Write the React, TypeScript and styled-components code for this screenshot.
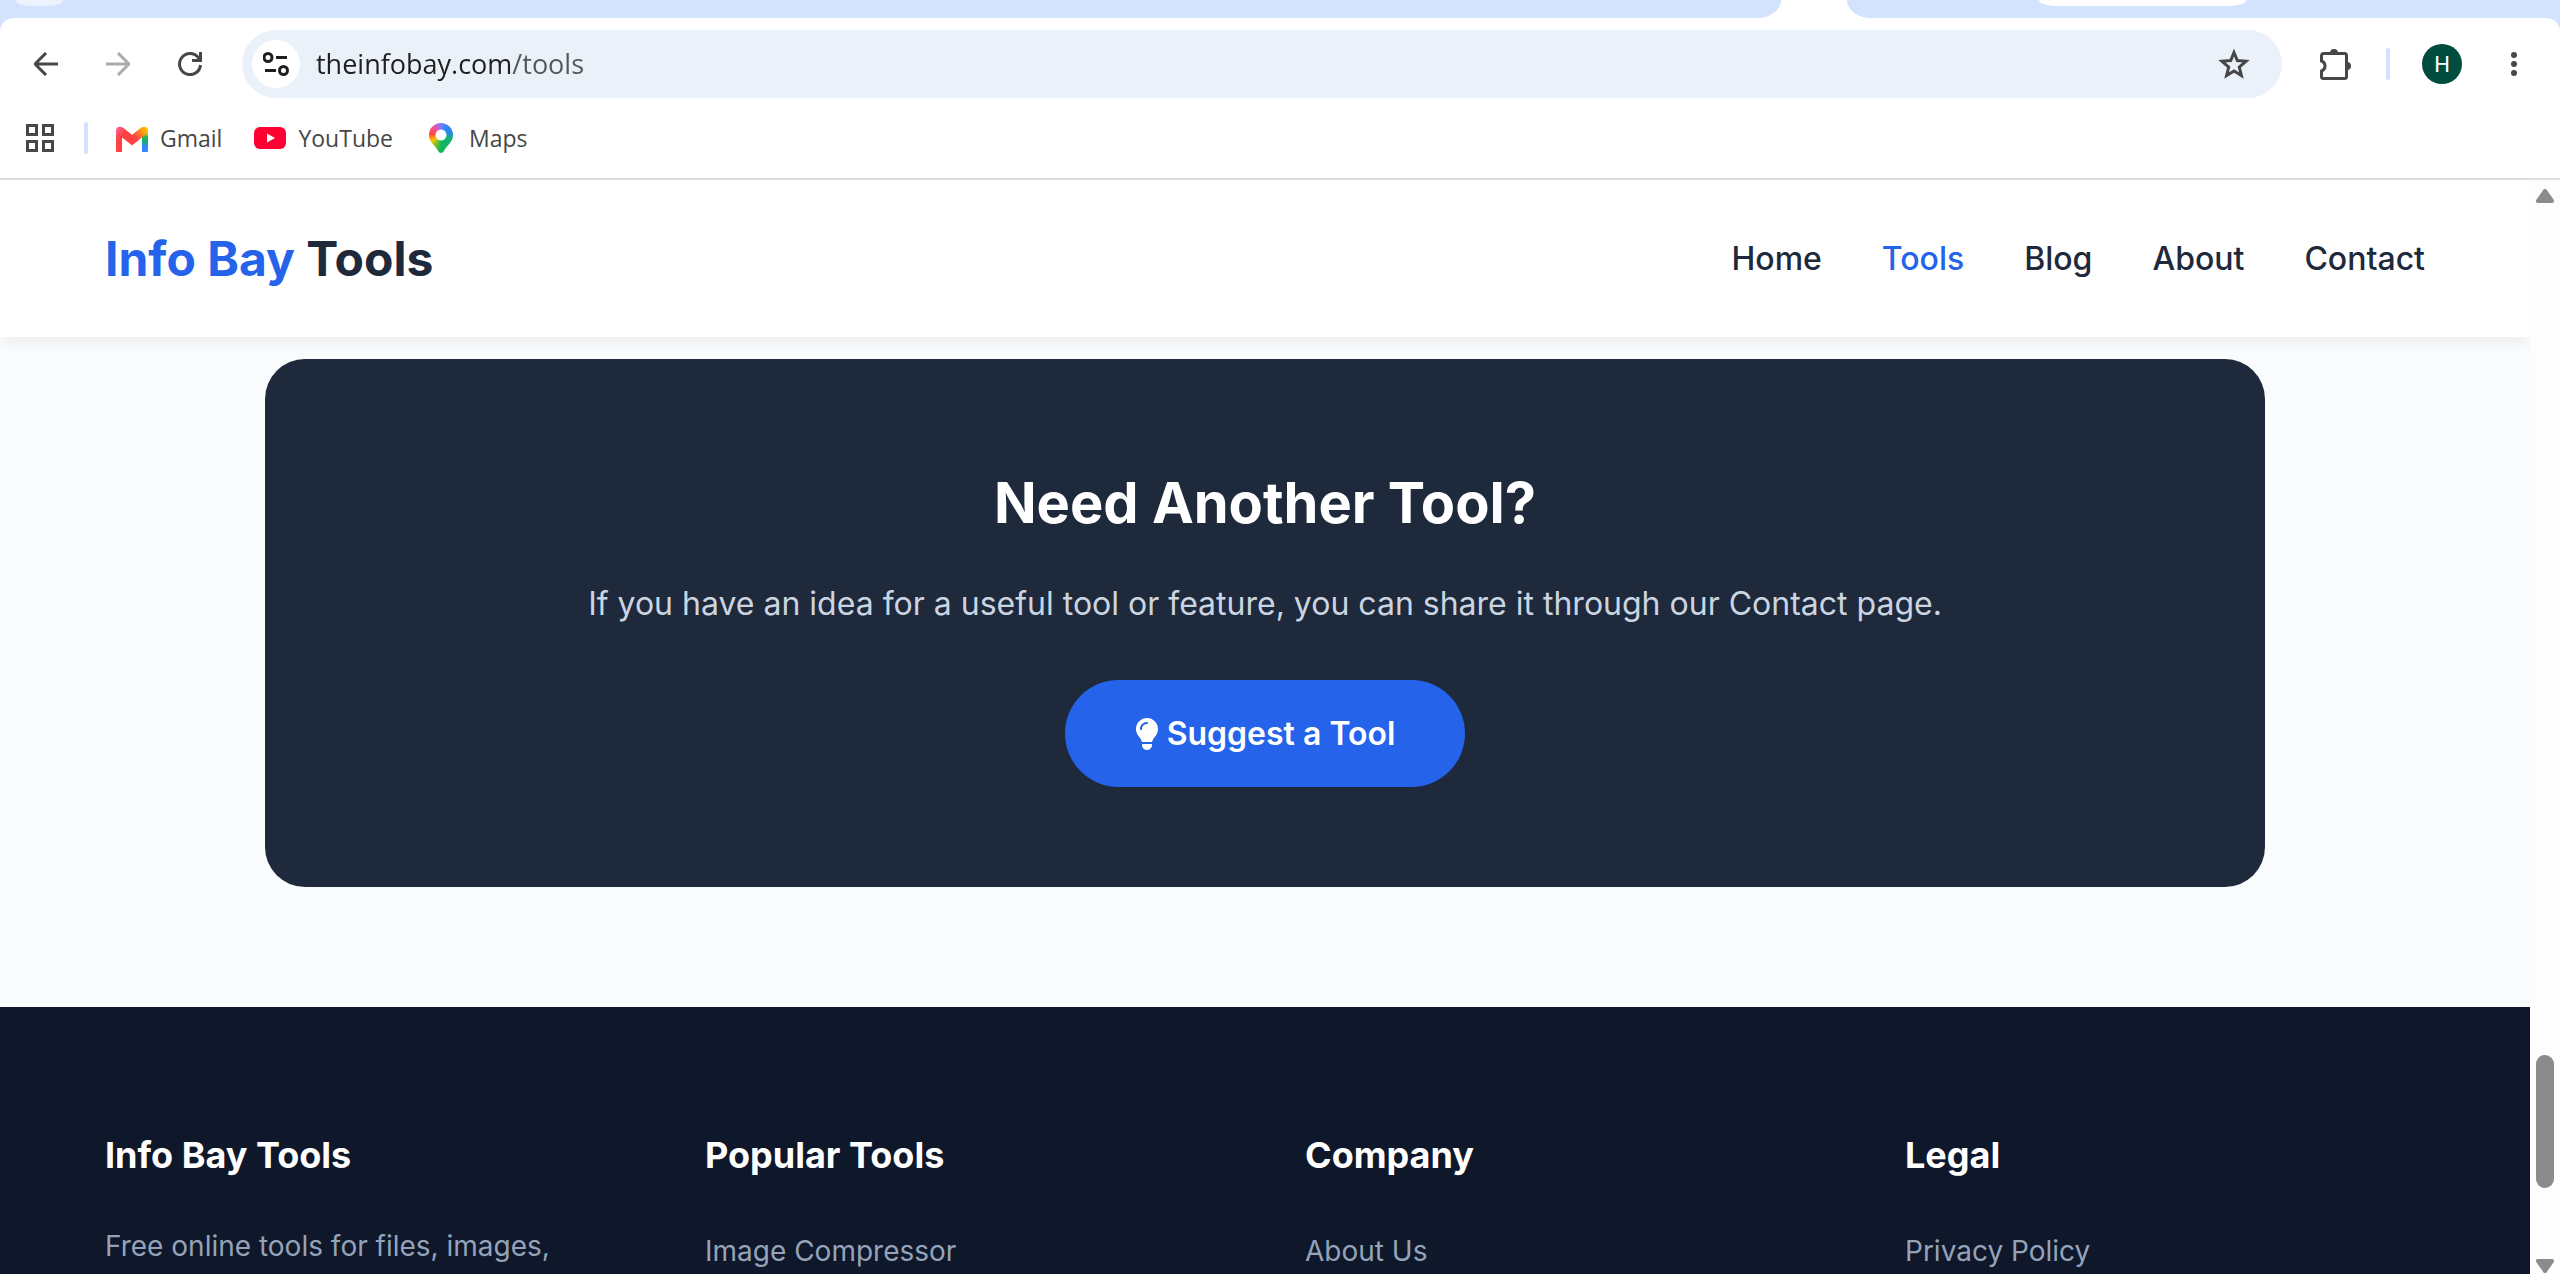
import React from 'react';
import styled, { createGlobalStyle } from 'styled-components';
import { FaLightbulb } from 'react-icons/fa6';

const GlobalStyle = createGlobalStyle`
  *, *::before, *::after { box-sizing: border-box; }
  body { margin: 0; background: #fff; font-family: Inter, sans-serif; overflow: hidden; }
  h2, h3, p, ul { margin: 0; padding: 0; }
  button, input { font: inherit; border: 0; margin: 0; }
  button { cursor: pointer; }
  a { color: inherit; text-decoration: none; }
`;

const Window = styled.div`
  height: 100vh;
  display: flex;
  flex-direction: column;
  overflow: hidden;
`;

/* Browser frame */
const TabStrip = styled.div`
  flex: none;
  height: 18px;
  display: flex;
  background: #fff;
`;
const TabsBefore = styled.div`
  flex: 1;
  padding-left: 16px;
  background: #d3e3fd;
  border-bottom-right-radius: 24px 18px;
`;
const ActiveTab = styled.div`
  flex: 0 0 66px;
`;
const TabsAfter = styled.div`
  flex: 0 0 713px;
  padding-left: 192px;
  background: #d3e3fd;
  border-bottom-left-radius: 24px 18px;
`;
const Chip = styled.div<{ $width: number; $color: string }>`
  width: ${(p) => p.$width}px;
  height: 6px;
  background: ${(p) => p.$color};
  border-radius: 0 0 16px 16px / 0 0 6px 6px;
`;
const Chrome = styled.div`
  flex: none;
  background: #d3e3fd;
`;
const ChromeSheet = styled.div`
  background: #fff;
  border-radius: 14px 14px 0 0;
  border-bottom: 2px solid #dedede;
`;
const Toolbar = styled.div`
  height: 92px;
  padding: 0 26px;
  display: flex;
  align-items: center;
  gap: 32px;
`;
const IconButton = styled.button<{ $color?: string }>`
  flex: none;
  display: flex;
  align-items: center;
  justify-content: center;
  width: 40px;
  height: 40px;
  padding: 0;
  background: transparent;
  color: ${(p) => p.$color ?? '#474747'};
`;
const AddressBar = styled.div`
  flex: 1;
  height: 68px;
  padding: 0 28px 0 10px;
  display: flex;
  align-items: center;
  background: #ebf1f9;
  border-radius: 34px;
`;
const SiteInfo = styled.button`
  flex: none;
  width: 48px;
  height: 48px;
  margin-right: 16px;
  padding: 0;
  display: flex;
  align-items: center;
  justify-content: center;
  background: #fff;
  border-radius: 50%;
`;
/* The host is darker than the path that follows it. */
const AddressInput = styled.input`
  flex: 1;
  padding: 0;
  font: 27px/40px 'Open Sans', sans-serif;
  color: #1f1f1f;
  background: linear-gradient(90deg, #1f1f1f 194px, #53565a 194px) text;
  -webkit-text-fill-color: transparent;
  outline: none;
`;
const Divider = styled.span`
  flex: none;
  width: 4px;
  height: 32px;
  background: #d3e3fd;
  border-radius: 2px;
`;
const Avatar = styled.button`
  flex: none;
  width: 40px;
  height: 40px;
  padding: 0;
  border-radius: 50%;
  background: #004d40;
  color: #fff;
  font: 22px Roboto, sans-serif;
`;
const Bookmarks = styled.nav`
  height: 68px;
  padding: 0 20px 12px;
  display: flex;
  align-items: center;
  gap: 24px;
`;
const BookmarkList = styled.div`
  display: flex;
  gap: 32px;
  padding-left: 4px;
`;
const Bookmark = styled.a`
  display: flex;
  align-items: center;
  gap: 12px;
  font: 23px/32px 'Open Sans', sans-serif;
  color: #474747;
`;

/* Site */
const Viewport = styled.div`
  flex: 1;
  min-height: 0;
  display: flex;
`;
const Page = styled.div`
  flex: 1;
  min-width: 0;
  overflow: hidden;
  background: #fafbfd;
`;
const Header = styled.header`
  position: relative;
  background: #fff;
  box-shadow: 0 8px 12px -2px rgba(0, 0, 0, 0.05);
`;
const Container = styled.div`
  max-width: 2400px;
  margin: 0 auto;
  padding: 0 40px;
`;
const HeaderRow = styled(Container)`
  height: 157px;
  padding-bottom: 1px;
  display: flex;
  align-items: center;
  justify-content: space-between;
`;
const Logo = styled.a`
  font-size: 48px;
  font-weight: 700;
  color: #1e293b;
  span { color: #2563eb; }
`;
const Menu = styled.nav`
  display: flex;
  gap: 60px;
`;
const MenuLink = styled.a<{ $active?: boolean }>`
  font-size: 32px;
  font-weight: 500;
  color: ${(p) => (p.$active ? '#2563eb' : '#1e293b')};
`;
const Main = styled.main`
  padding: 22px 40px 120px;
`;
const Cta = styled.section`
  max-width: 2000px;
  margin: 0 auto;
  padding: 96px 80px 100px;
  display: flex;
  flex-direction: column;
  align-items: center;
  background: #1e293b;
  border-radius: 40px;
  text-align: center;
`;
const CtaTitle = styled.h2`
  font-size: 56px;
  line-height: 96px;
  font-weight: 700;
  color: #fff;
`;
const CtaText = styled.p`
  margin: 25px 0 48px;
  font-size: 32px;
  line-height: 56px;
  color: #cbd5e1;
`;
const CtaButton = styled.button`
  display: flex;
  align-items: center;
  gap: 8px;
  height: 107px;
  padding: 0 70px;
  border-radius: 54px;
  background: #2563eb;
  color: #fff;
  font-size: 32px;
  font-weight: 600;
`;
const BulbIcon = styled(FaLightbulb)`
  width: 24px;
  height: 32px;
`;
const Footer = styled.footer`
  background: #0f172a;
  padding: 120px 0;
`;
const FooterGrid = styled(Container)`
  display: grid;
  grid-template-columns: repeat(4, 1fr);
  gap: 80px;
`;
const FooterTitle = styled.h3`
  margin-bottom: 35px;
  font-size: 36px;
  line-height: 56px;
  font-weight: 700;
  color: #fff;
`;
const FooterText = styled.p`
  font-size: 28px;
  line-height: 56px;
  color: #94a3b8;
`;
const FooterList = styled.ul`
  list-style: none;
  font-size: 28px;
  line-height: 66px;
  color: #94a3b8;
`;
const Scrollbar = styled.div`
  flex: none;
  width: 30px;
  padding: 9px 6px 1px;
  display: flex;
  flex-direction: column;
  align-items: center;
  background: #fdfdfd;
`;
const Thumb = styled.div`
  width: 18px;
  height: 133px;
  border-radius: 9px;
  background: #8b8b8b;
`;
const Spacer = styled.div<{ $grow: number }>`
  flex: ${(p) => p.$grow} 1 0;
`;

const menu = ['Home', 'Tools', 'Blog', 'About', 'Contact'];
const columns = [
  { title: 'Popular Tools', link: 'Image Compressor' },
  { title: 'Company', link: 'About Us' },
  { title: 'Legal', link: 'Privacy Policy' },
];

const line = { fill: 'none', stroke: 'currentColor', strokeWidth: 3 };

const BackIcon = ({ forward }: { forward?: boolean }) => (
  <svg width="24" height="24" viewBox="0 0 24 24" {...line}>
    <path d={forward ? 'M0 12h22M12 1l11 11-11 11' : 'M24 12H2M12 1L1 12l11 11'} />
  </svg>
);
const ReloadIcon = () => (
  <svg width="24" height="24" viewBox="0 0 24 24" {...line}>
    <path d="M22.5 13A10.5 10.5 0 1 1 20.5 5.8L22 8" />
    <path d="M22.5 0v8.5H14" />
  </svg>
);
const TuneIcon = () => (
  <svg width="26" height="24" viewBox="0 0 26 24" fill="none" stroke="#1f1f1f" strokeWidth="3">
    <circle cx="5" cy="5.5" r="4" />
    <path d="M13 5.500h11M2 18.500h11" />
    <circle cx="20.500" cy="18.500" r="4" />
  </svg>
);
const StarIcon = () => (
  <svg width="32" height="32" viewBox="0 0 32 32" {...line}>
    <path d="M16 4.500l3.300 8.100 8.700.7-6.700 5.700 2.100 8.500L16 22.900l-7.400 4.600 2.100-8.500L4 13.300l8.700-.7z" />
  </svg>
);
const PuzzleIcon = () => (
  <svg width="36" height="32" viewBox="-4 0 36 32">
    <path
      d="M3.500 5.500h21a2 2 0 0 1 2 2v21a2 2 0 0 1-2 2h-21a2 2 0 0 1-2-2v-5.500a5.300 5.300 0 0 0 0-10V7.500a2 2 0 0 1 2-2z"
      {...line}
    />
    <path d="M10 5a4 4 0 0 1 8 0zM27 14a4 4 0 0 1 0 8z" fill="currentColor" />
  </svg>
);
const DotsIcon = () => (
  <svg width="6" height="24" viewBox="0 0 6 24" fill="currentColor">
    <circle cx="3" cy="3" r="3" />
    <circle cx="3" cy="12" r="3" />
    <circle cx="3" cy="21" r="3" />
  </svg>
);
const GridIcon = () => (
  <svg width="28" height="28" viewBox="0 0 28 28" fill="none" stroke="currentColor" strokeWidth="3">
    <path d="M1.500 1.500h9v9h-9zM17.500 1.500h9v9h-9zM1.500 17.500h9v9h-9zM17.500 17.500h9v9h-9z" />
  </svg>
);
const GmailIcon = () => (
  <svg width="32" height="32" viewBox="0 0 32 32">
    <defs>
      <linearGradient id="gmailLeft" x1="0" y1="0" x2="0.600" y2="0.600">
        <stop offset="0" stopColor="#ff63a8" />
        <stop offset="0.600" stopColor="#ff4141" />
      </linearGradient>
      <linearGradient id="gmailDiagonal" x1="0" y1="1" x2="1" y2="0">
        <stop offset="0.300" stopColor="#ff4141" />
        <stop offset="0.900" stopColor="#ffc400" />
      </linearGradient>
      <linearGradient id="gmailRight" x1="0" y1="0" x2="0" y2="1">
        <stop offset="0.150" stopColor="#ffcc00" />
        <stop offset="0.350" stopColor="#22b455" />
        <stop offset="0.550" stopColor="#12b07a" />
        <stop offset="0.800" stopColor="#3388ff" />
      </linearGradient>
    </defs>
    <path d="M26 8l6-1v22q0 1-1 1h-5z" fill="url(#gmailRight)" />
    <path d="M16 13l8.500-7C28 3.500 32 5 32 8.500q0 1.800-1.800 3.500L16 23.500z" fill="url(#gmailDiagonal)" />
    <path d="M0 8.500C0 5 4 3.500 7.500 6L16.200 13v10.500L6 15.500V30H1q-1 0-1-1z" fill="url(#gmailLeft)" />
  </svg>
);
const YouTubeIcon = () => (
  <svg width="32" height="32" viewBox="0 0 32 32">
    <rect y="5" width="32" height="22" rx="6" fill="#ff0033" />
    <path d="M13 11.500l8 4.500-8 4.500z" fill="#fff" />
  </svg>
);
const PinShape = styled.span`
  width: 24px;
  height: 30px;
  margin: 0 4px;
  background: conic-gradient(from 0deg at 50% 40%, #7a7bff 0deg, #2f8cf5 30deg, #2b86e8 75deg, #10b377 110deg, #12b558 180deg, #6cc22e 205deg, #ffc400 238deg, #ff4a3d 275deg, #f0509a 320deg, #7a7bff 360deg);
  clip-path: path(evenodd, 'M12 0a12 12 0 0 1 12 12c0 5-3 8-6 11.500-2 2.500-3 4.500-4 5.700q-2 1.500-4 0c-1-1.200-2-3.200-4-5.700C3 20 0 17 0 12A12 12 0 0 1 12 0zM12 6.500a5.500 5.500 0 1 0 0 11 5.500 5.500 0 0 0 0-11z');
`;
const ScrollArrow = ({ down }: { down?: boolean }) => (
  <svg width="18" height="14" viewBox="0 0 18 14" fill="#8b8b8b" stroke="#8b8b8b" strokeWidth="4" strokeLinejoin="round">
    <path d={down ? 'M2 2h14l-7 10z' : 'M2 12h14L9 2z'} />
  </svg>
);

export default function App() {
  return (
    <Window>
      <GlobalStyle />
      <TabStrip>
        <TabsBefore><Chip $width={47} $color="#ecf3fe" /></TabsBefore>
        <ActiveTab />
        <TabsAfter><Chip $width={207} $color="#fff" /></TabsAfter>
      </TabStrip>
      <Chrome>
        <ChromeSheet>
          <Toolbar>
            <IconButton aria-label="Back"><BackIcon /></IconButton>
            <IconButton aria-label="Forward" $color="#ababab"><BackIcon forward /></IconButton>
            <IconButton aria-label="Reload"><ReloadIcon /></IconButton>
            <AddressBar>
              <SiteInfo aria-label="Site information"><TuneIcon /></SiteInfo>
              <AddressInput aria-label="Address" defaultValue="theinfobay.com/tools" spellCheck={false} />
              <IconButton aria-label="Bookmark"><StarIcon /></IconButton>
            </AddressBar>
            <IconButton aria-label="Extensions"><PuzzleIcon /></IconButton>
            <Divider />
            <Avatar aria-label="Profile">H</Avatar>
            <IconButton aria-label="Menu"><DotsIcon /></IconButton>
          </Toolbar>
          <Bookmarks>
            <IconButton aria-label="Apps"><GridIcon /></IconButton>
            <Divider />
            <BookmarkList>
              <Bookmark href="#"><GmailIcon />Gmail</Bookmark>
              <Bookmark href="#"><YouTubeIcon />YouTube</Bookmark>
              <Bookmark href="#"><PinShape />Maps</Bookmark>
            </BookmarkList>
          </Bookmarks>
        </ChromeSheet>
      </Chrome>
      <Viewport>
        <Page>
          <Header>
            <HeaderRow>
              <Logo href="#"><span>Info Bay</span> Tools</Logo>
              <Menu>
                {menu.map((t) => (
                  <MenuLink key={t} href="#" $active={t === 'Tools'}>{t}</MenuLink>
                ))}
              </Menu>
            </HeaderRow>
          </Header>
          <Main>
            <Cta>
              <CtaTitle>Need Another Tool?</CtaTitle>
              <CtaText>If you have an idea for a useful tool or feature, you can share it through our Contact page.</CtaText>
              <CtaButton><BulbIcon />Suggest a Tool</CtaButton>
            </Cta>
          </Main>
          <Footer>
            <FooterGrid>
              <div>
                <FooterTitle>Info Bay Tools</FooterTitle>
                <FooterText>Free online tools for files, images,</FooterText>
              </div>
              {columns.map((c) => (
                <div key={c.title}>
                  <FooterTitle>{c.title}</FooterTitle>
                  <FooterList><li><a href="#">{c.link}</a></li></FooterList>
                </div>
              ))}
            </FooterGrid>
          </Footer>
        </Page>
        <Scrollbar>
          <ScrollArrow />
          <Spacer $grow={12} />
          <Thumb />
          <Spacer $grow={1} />
          <ScrollArrow down />
        </Scrollbar>
      </Viewport>
    </Window>
  );
}
